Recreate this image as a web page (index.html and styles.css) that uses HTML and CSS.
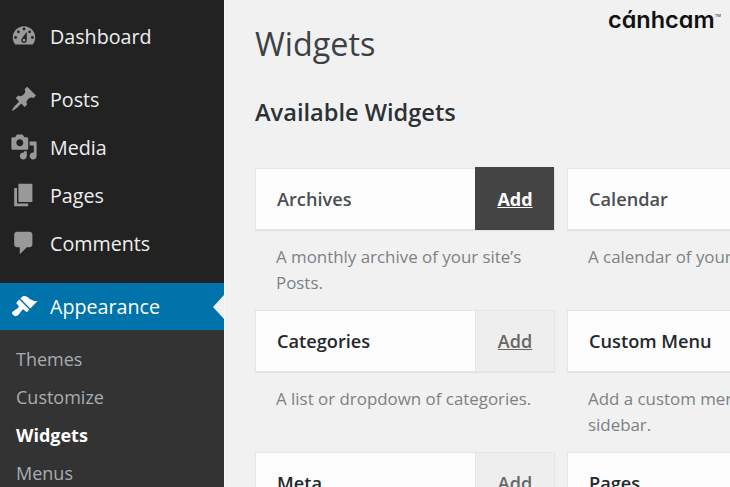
FILE: index.html
```html
<!DOCTYPE html>
<html>
<head>
    <title>Widgets</title>
    <meta name="viewport" content="width=device-width, initial-scale=1.0">
    <link rel="stylesheet" href="styles.css">
</head>
<body>
    <div class="admin">
        <nav class="sidebar">
            <ul class="menu">
                <li class="menu-item">
                    <svg class="menu-icon" viewBox="0 0 20 20"><path fill-rule="evenodd" d="M3.76 16h12.48c1.1-1.37 1.76-3.11 1.76-5 0-4.42-3.58-8-8-8s-8 3.58-8 8c0 1.89.66 3.63 1.76 5zM10 4c.55 0 1 .45 1 1s-.45 1-1 1-1-.45-1-1 .45-1 1-1zM6 6c.55 0 1 .45 1 1s-.45 1-1 1-1-.45-1-1 .45-1 1-1zm8 0c.55 0 1 .45 1 1s-.45 1-1 1-1-.45-1-1 .45-1 1-1zm-5.37 5.55L12 7v6c0 1.1-.9 2-2 2s-2-.9-2-2c0-.57.24-1.08.63-1.45zM4 10c.55 0 1 .45 1 1s-.45 1-1 1-1-.45-1-1 .45-1 1-1zm12 0c.55 0 1 .45 1 1s-.45 1-1 1-1-.45-1-1 .45-1 1-1zm-5 3c0-.55-.45-1-1-1s-1 .45-1 1 .45 1 1 1 1-.45 1-1z"/></svg>
                    Dashboard
                </li>
                <li class="menu-sep"></li>
                <li class="menu-item">
                    <svg class="menu-icon" viewBox="0 0 20 20"><path d="M10.44 3.02l1.82-1.82 6.36 6.35-1.83 1.82c-1.05-.68-2.48-.57-3.41.36l-.75.75c-.92.93-1.04 2.35-.35 3.41l-1.83 1.82-2.41-2.41-2.8 2.79c-.42.42-3.38 2.71-3.8 2.29s1.86-3.39 2.28-3.81l2.79-2.79L4.1 9.36l1.83-1.82c1.05.69 2.48.57 3.4-.36l.75-.75c.93-.92 1.05-2.35.36-3.41z"/></svg>
                    Posts
                </li>
                <li class="menu-item">
                    <svg class="menu-icon" viewBox="0 0 20 20"><path fill-rule="evenodd" d="M13 11V4c0-.55-.45-1-1-1h-1.67L9 1H5L3.67 3H2c-.55 0-1 .45-1 1v7c0 .55.45 1 1 1h10c.55 0 1-.45 1-1zM7 4.5c1.38 0 2.5 1.12 2.5 2.5S8.38 9.5 7 9.5 4.5 8.38 4.5 7 5.62 4.5 7 4.5zM14 6h5v10.5c0 1.38-1.12 2.5-2.5 2.5S14 17.88 14 16.5s1.12-2.5 2.5-2.5c.17 0 .34.02.5.05V9h-3V6zm-4 8.05V13h2v3.5c0 1.38-1.12 2.5-2.5 2.5S7 17.88 7 16.5 8.12 14 9.5 14c.17 0 .34.02.5.05z"/></svg>
                    Media
                </li>
                <li class="menu-item">
                    <svg class="menu-icon" viewBox="0 0 20 20"><path d="M6 15V2h10v13H6zm-1 1h8v2H3V5h2v11z"/></svg>
                    Pages
                </li>
                <li class="menu-item">
                    <svg class="menu-icon" viewBox="0 0 20 20"><path d="M5 2h9c1.1 0 2 .9 2 2v7c0 1.1-.9 2-2 2h-2l-5 5v-5H5c-1.1 0-2-.9-2-2V4c0-1.1.9-2 2-2z"/></svg>
                    Comments
                </li>
                <li class="menu-sep"></li>
                <li class="menu-item current">
                    <svg class="menu-icon" viewBox="0 0 20 20"><path d="M14.48 11.06L7.41 3.99l1.5-1.5c.5-.56 2.3-.47 3.51.32 1.21.8 1.43 1.28 2.91 2.1 1.18.64 2.45 1.26 4.45.85zm-.71.71L6.7 4.7 4.93 6.47c-.39.39-.39 1.02 0 1.41l1.06 1.06c.39.39.39 1.03 0 1.42-.6.6-1.43 1.11-2.21 1.69-.35.26-.7.53-1.01.84C1.43 13.23 1 14.52 2.3 15.8s2.57.86 3.91-.45c.31-.31.58-.66.84-1.01.58-.78 1.09-1.61 1.69-2.21.39-.39 1.03-.39 1.42 0l1.06 1.06c.39.39 1.02.39 1.41 0z"/></svg>
                    Appearance
                </li>
            </ul>
            <ul class="submenu">
                <li>Themes</li>
                <li>Customize</li>
                <li class="active">Widgets</li>
                <li>Menus</li>
            </ul>
        </nav>

        <main class="content">
            <h1>Widgets</h1>
            <h2>Available Widgets</h2>
            <div class="widgets">
                <div class="widget">
                    <div class="widget-top">
                        <span class="widget-title">Archives</span>
                        <a class="widget-add hover">Add</a>
                    </div>
                    <p>A monthly archive of your site’s Posts.</p>
                </div>
                <div class="widget">
                    <div class="widget-top">
                        <span class="widget-title">Calendar</span>
                    </div>
                    <p class="clipped">A calendar of your</p>
                </div>
                <div class="widget">
                    <div class="widget-top">
                        <span class="widget-title strong">Categories</span>
                        <a class="widget-add">Add</a>
                    </div>
                    <p>A list or dropdown of categories.</p>
                </div>
                <div class="widget">
                    <div class="widget-top">
                        <span class="widget-title strong">Custom Menu</span>
                    </div>
                    <p class="clipped">Add a custom men<br>sidebar.</p>
                </div>
                <div class="widget">
                    <div class="widget-top">
                        <span class="widget-title strong">Meta</span>
                        <a class="widget-add">Add</a>
                    </div>
                </div>
                <div class="widget">
                    <div class="widget-top">
                        <span class="widget-title strong">Pages</span>
                    </div>
                </div>
            </div>
        </main>
    </div>
    <div class="logo">cánhcam<sup>TM</sup></div>
</body>
</html>
```

FILE: styles.css
```css
* { box-sizing: border-box; }
html, body { height: 100%; }
body {
    margin: 0;
    overflow: hidden;
    background: #f1f1f1;
    font-family: 'Open Sans', Arial, sans-serif;
    color: #23282d;
}
ul { list-style: none; margin: 0; padding: 0; }

.admin { display: flex; height: 487px; overflow: hidden; }

/* sidebar */
.sidebar {
    flex: 0 0 224px;
    background: #222;
    padding-top: 12px;
}
.menu-item {
    display: flex;
    align-items: center;
    position: relative;
    height: 48px;
    padding-left: 10px;
    font-size: 19.7px;
    color: #eee;
}
.menu-icon {
    flex: none;
    width: 28px;
    height: 28px;
    margin-right: 12px;
    fill: #999;
}
.menu-sep { height: 15px; }
.menu-item.current {
    height: 47px;
    margin-top: 1px;
    background: #0073aa;
    color: #fff;
}
.menu-item.current .menu-icon { fill: #fff; }
.menu-item.current::after {
    content: "";
    position: absolute;
    right: 0;
    top: 12px;
    border: 12px solid transparent;
    border-left-width: 0;
    border-right-width: 11px;
    border-right-color: #f1f1f1;
}
.submenu {
    background: #333;
    padding: 10px 0 20px 16px;
    font-size: 18px;
    color: #a7acb1;
}
.submenu li { height: 38px; line-height: 38px; }
.submenu .active { color: #fff; font-weight: 700; }

/* content */
.content {
    flex: 1;
    min-width: 0;
    padding: 0 0 0 30px;
    border-left: 1px solid #f8f8f8;
    overflow: hidden;
}
h1 {
    margin: 19px 0 0;
    font-size: 32.3px;
    line-height: 48px;
    font-weight: 400;
    color: #3c4146;
}
h2 {
    margin: 29px 0 0;
    font-size: 23.6px;
    line-height: 32px;
    font-weight: 600;
    color: #2c3136;
}
.widgets {
    display: grid;
    grid-template-columns: 300px 300px;
    grid-auto-rows: 142px;
    column-gap: 12px;
    margin-top: 40px;
}
.widget-top {
    display: flex;
    height: 62px;
    background: #fdfdfd;
    border: 1px solid #e5e5e5;
    box-shadow: 0 1px 1px rgba(0,0,0,0.06);
}
.widget-title {
    flex: 1;
    padding-left: 21px;
    font-size: 18.2px;
    line-height: 60px;
    font-weight: 600;
    color: #4a4f55;
}
.widget-title.strong { color: #23282d; }
.widget-add {
    flex: 0 0 79px;
    text-align: center;
    font-size: 18px;
    line-height: 60px;
    font-weight: 600;
    text-decoration: underline;
    background: #eee;
    border-left: 1px solid #e5e5e5;
    color: #666;
}
.widget-add.hover {
    margin-top: -2px;
    line-height: 64px;
    height: 63px;
    background: #444;
    border-color: #444;
    color: #fff;
    font-weight: 700;
}
.widget p {
    margin: 14px 0 0;
    padding: 0 21px;
    font-size: 16.9px;
    line-height: 26px;
    color: #7d8184;
}
.widget p.clipped { padding-right: 0; white-space: nowrap; }

.logo {
    position: absolute;
    top: 3px;
    left: 608px;
    font-family: Inter, sans-serif;
    font-size: 23.5px;
    line-height: 34px;
    font-weight: 600;
    font-feature-settings: "cv11";
    color: #111;
}
.logo sup {
    font-size: 4px;
    vertical-align: 11px;
    line-height: 0;
    font-weight: 400;
}
```
